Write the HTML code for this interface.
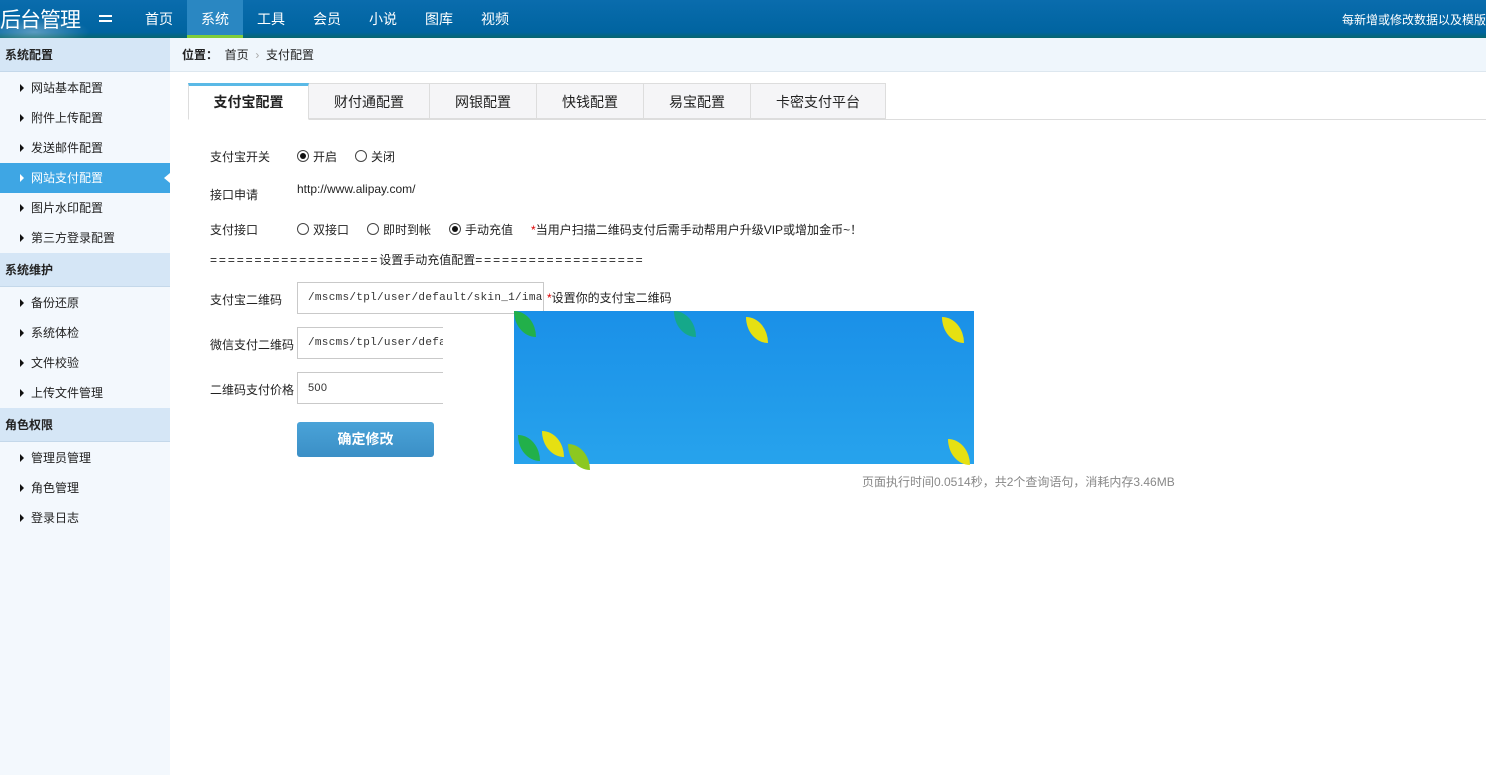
<!DOCTYPE html>
<html><head><meta charset="utf-8"><style>
*{margin:0;padding:0;box-sizing:border-box}
body{width:1486px;height:775px;overflow:hidden;background:#fff;font-family:"Liberation Sans","Noto Sans CJK SC",sans-serif;font-size:12px;color:#222;position:relative}
.top{position:absolute;left:0;top:0;width:1486px;height:38px;background:linear-gradient(#0a6cad,#0064a0 85%,#05666e)}
.logo{position:absolute;left:0;top:4px;color:#fff;font-size:21px;letter-spacing:-1px}
.logo:before{content:"";position:absolute;left:-10px;top:10px;width:110px;height:30px;background:radial-gradient(ellipse at 40% 60%,rgba(255,255,255,.35),transparent 60%)}
.eq{position:absolute;left:99px;top:15px;width:13px;height:2px;background:#fff;box-shadow:0 5px 0 #fff}
.nav{position:absolute;top:0;height:38px;line-height:38px;color:#fff;font-size:14px}
.nav.act{background:#2a87c2;border-bottom:3px solid #7fcd3a;line-height:38px}
.rt{position:absolute;right:0;top:11px;color:#fff;font-size:12px;white-space:nowrap}
.side{position:absolute;left:0;top:38px;width:170px;height:737px;background:#f3f8fd}
.h{position:absolute;left:0;width:170px;height:34px;line-height:34px;background:#d5e6f6;border-bottom:1px solid #c4d8ea;font-weight:bold;padding-left:5px;font-size:12px}
.it{position:absolute;left:0;width:170px;height:30px;line-height:30px;padding-left:20px;font-size:12px}
.it:before{content:"";display:inline-block;border-left:4px solid #111;border-top:4px solid transparent;border-bottom:4px solid transparent;margin-right:7px;vertical-align:0}
.it.a{background:#3ea6e4;color:#fff}.it.a:before{border-left-color:#fff}
.it.a:after{content:"";position:absolute;right:0;top:10px;border-right:6px solid #fff;border-top:5px solid transparent;border-bottom:5px solid transparent}
.bc{position:absolute;left:170px;top:38px;width:1316px;height:34px;line-height:34px;background:#eff6fc;border-bottom:1px solid #dde7ef;padding-left:12px}
.tabline{position:absolute;left:188px;top:119px;width:1298px;height:1px;background:#ddd}
.tab{position:absolute;top:83px;height:36px;line-height:36px;text-align:center;background:#f5f5f7;border:1px solid #ddd;border-left:none;font-size:14px}
.tab.a{background:#fff;border-top:3px solid #5ab9e6;border-left:1px solid #ddd;border-bottom:1px solid #fff;height:37px;font-weight:bold;line-height:33px}
.l{position:absolute;left:210px;font-size:12px}
.r{position:absolute;font-size:12px;white-space:nowrap}
.rad{display:inline-block;width:12px;height:12px;border:1px solid #444;border-radius:50%;vertical-align:-1px;margin-right:4px;position:relative;background:#fff}
.rad.on:after{content:"";position:absolute;left:2px;top:2px;width:6px;height:6px;border-radius:50%;background:#111}
.gap{display:inline-block;width:18px}
.inp{position:absolute;left:297px;height:32px;border:1px solid #c9c9c9;background:#fff;font-family:"Liberation Mono",monospace;font-size:11px;letter-spacing:0.3px;line-height:30px;padding-left:10px;overflow:hidden;white-space:nowrap;color:#333}
.red{color:#d00}
.eqs{letter-spacing:1.9px}
.btn{position:absolute;left:297px;top:422px;width:137px;height:35px;background:linear-gradient(#4aa3d8,#3b8fc6);border-radius:3px;color:#fff;font-weight:bold;font-size:14px;text-align:center;line-height:35px}
.img{position:absolute;left:514px;top:311px;width:460px;height:153px;background:linear-gradient(#1a90e8,#27a3ec)}
.lf{position:absolute;width:22px;height:26px;border-radius:0 100% 0 100%}
</style></head><body>
<div class="top">
<div class="logo">后台管理</div><div class="eq"></div>
<div class="nav" style="left:145px">首页</div>
<div class="nav act" style="left:187px;width:56px;text-align:center">系统</div>
<div class="nav" style="left:257px">工具</div>
<div class="nav" style="left:313px">会员</div>
<div class="nav" style="left:369px">小说</div>
<div class="nav" style="left:425px">图库</div>
<div class="nav" style="left:481px">视频</div>
<div class="rt">每新增或修改数据以及模版</div>
</div>
<div class="side">
<div class="h" style="top:0">系统配置</div>
<div class="it" style="top:35px">网站基本配置</div>
<div class="it" style="top:65px">附件上传配置</div>
<div class="it" style="top:95px">发送邮件配置</div>
<div class="it a" style="top:125px">网站支付配置</div>
<div class="it" style="top:155px">图片水印配置</div>
<div class="it" style="top:185px">第三方登录配置</div>
<div class="h" style="top:215px">系统维护</div>
<div class="it" style="top:250px">备份还原</div>
<div class="it" style="top:280px">系统体检</div>
<div class="it" style="top:310px">文件校验</div>
<div class="it" style="top:340px">上传文件管理</div>
<div class="h" style="top:370px">角色权限</div>
<div class="it" style="top:405px">管理员管理</div>
<div class="it" style="top:435px">角色管理</div>
<div class="it" style="top:465px">登录日志</div>
</div>
<div class="bc"><b>位置：</b>&nbsp; 首页 <span style="color:#aaa">&nbsp;›&nbsp;</span> 支付配置</div>
<div class="tabline"></div>
<div class="tab a" style="left:188px;width:121px">支付宝配置</div>
<div class="tab" style="left:309px;width:121px">财付通配置</div>
<div class="tab" style="left:430px;width:107px">网银配置</div>
<div class="tab" style="left:537px;width:107px">快钱配置</div>
<div class="tab" style="left:644px;width:107px">易宝配置</div>
<div class="tab" style="left:751px;width:135px">卡密支付平台</div>

<div class="l" style="top:148px">支付宝开关</div>
<div class="r" style="left:297px;top:148px"><span class="rad on"></span>开启<span class="gap"></span><span class="rad"></span>关闭</div>
<div class="l" style="top:186px">接口申请</div>
<div class="r" style="left:297px;top:182px">http://www.alipay.com/</div>
<div class="l" style="top:221px">支付接口</div>
<div class="r" style="left:297px;top:221px"><span class="rad"></span>双接口<span class="gap"></span><span class="rad"></span>即时到帐<span class="gap"></span><span class="rad on"></span>手动充值<span class="gap"></span><span class="red">*</span>当用户扫描二维码支付后需手动帮用户升级VIP或增加金币~！</div>
<div class="l" style="top:251px"><span class="eqs">===================</span>设置手动充值配置<span class="eqs">===================</span></div>
<div class="l" style="top:291px">支付宝二维码</div>
<div class="inp" style="top:282px;width:247px">/mscms/tpl/user/default/skin_1/images/z</div>
<div class="r" style="left:547px;top:289px"><span class="red">*</span>设置你的支付宝二维码</div>
<div class="l" style="top:336px">微信支付二维码</div>
<div class="inp" style="top:327px;width:146px;border-right:none">/mscms/tpl/user/default</div>
<div class="l" style="top:381px">二维码支付价格</div>
<div class="inp" style="top:372px;width:146px;border-right:none;font-family:'Liberation Sans',sans-serif">500</div>
<div class="btn">确定修改</div>
<div class="img">
<div class="lf" style="left:0;top:0;background:#22b04a"></div>
<div class="lf" style="left:160px;top:0;background:#15a88a"></div>
<div class="lf" style="left:232px;top:6px;background:#e6e012"></div>
<div class="lf" style="left:428px;top:6px;background:#e6e012"></div>
<div class="lf" style="left:4px;top:124px;background:#22b04a"></div>
<div class="lf" style="left:28px;top:120px;background:#e6e012"></div>
<div class="lf" style="left:54px;top:133px;background:#8cc820"></div>
<div class="lf" style="left:434px;top:128px;background:#e6e012"></div>
</div>
<div class="r" style="left:862px;top:473px;color:#888">页面执行时间0.0514秒，共2个查询语句，消耗内存3.46MB</div>
</body></html>
